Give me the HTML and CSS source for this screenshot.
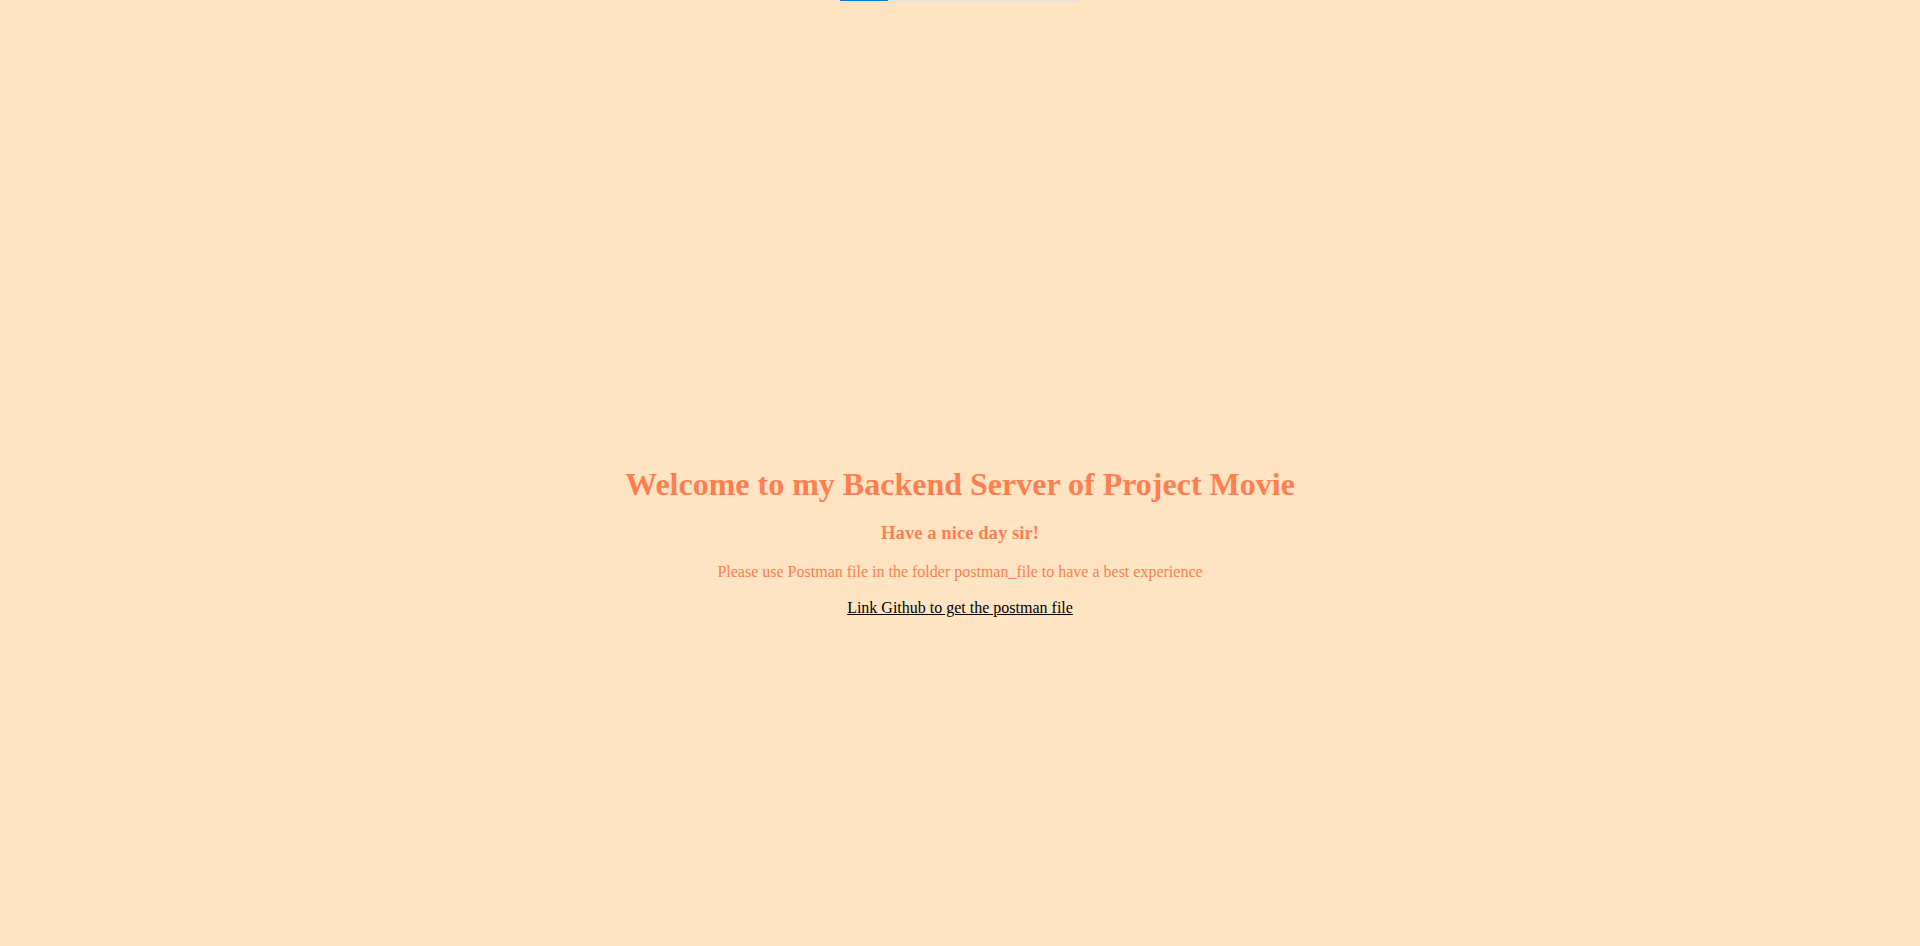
FILE: index.html
```html
<!DOCTYPE html>
<html lang="en">
<head>
<meta charset="utf-8">
<title>Project Movie Backend</title>
<link rel="stylesheet" href="styles.css">
</head>
<body>
<div class="progress"><div class="progress-fill"></div></div>
<main class="page">
  <div class="content">
    <h1 class="title">Welcome to my Backend Server of Project Movie</h1>
    <h3 class="subtitle">Have a nice day sir!</h3>
    <p class="note">Please use Postman file in the folder postman_file to have a best experience</p>
    <p class="link-row"><a class="link" href="#">Link Github to get the postman file</a></p>
  </div>
</main>
</body>
</html>
```
FILE: styles.css
```css
html, body {
  margin: 0;
  padding: 0;
}
body {
  background: #ffe4c4;
  font-family: "Liberation Serif", "Times New Roman", serif;
  color: #000;
}
.progress {
  position: absolute;
  top: 0;
  left: 50%;
  transform: translateX(-50%);
  width: 240px;
  height: 1px;
  background: #e3e3e3;
}
.progress-fill {
  width: 48px;
  height: 100%;
  background: #0078d4;
}
.page {
  min-height: 100vh;
  box-sizing: border-box;
  padding-top: 132px;
  display: flex;
  flex-direction: column;
  align-items: center;
  justify-content: center;
}
.content {
  text-align: center;
}
.title {
  font-size: 32px;
  font-weight: bold;
  margin: 21.44px 0 16.5px;
  color: #ff7f50;
}
.subtitle {
  font-size: 18.72px;
  font-weight: bold;
  margin: 18.72px 0;
  color: #ff7f50;
}
.note {
  font-size: 16px;
  margin: 16px 0 18.5px;
  color: #ff7f50;
}
.link-row {
  font-size: 16px;
  margin: 16px 0;
}
.link {
  color: #000;
  text-decoration: underline;
}
```
